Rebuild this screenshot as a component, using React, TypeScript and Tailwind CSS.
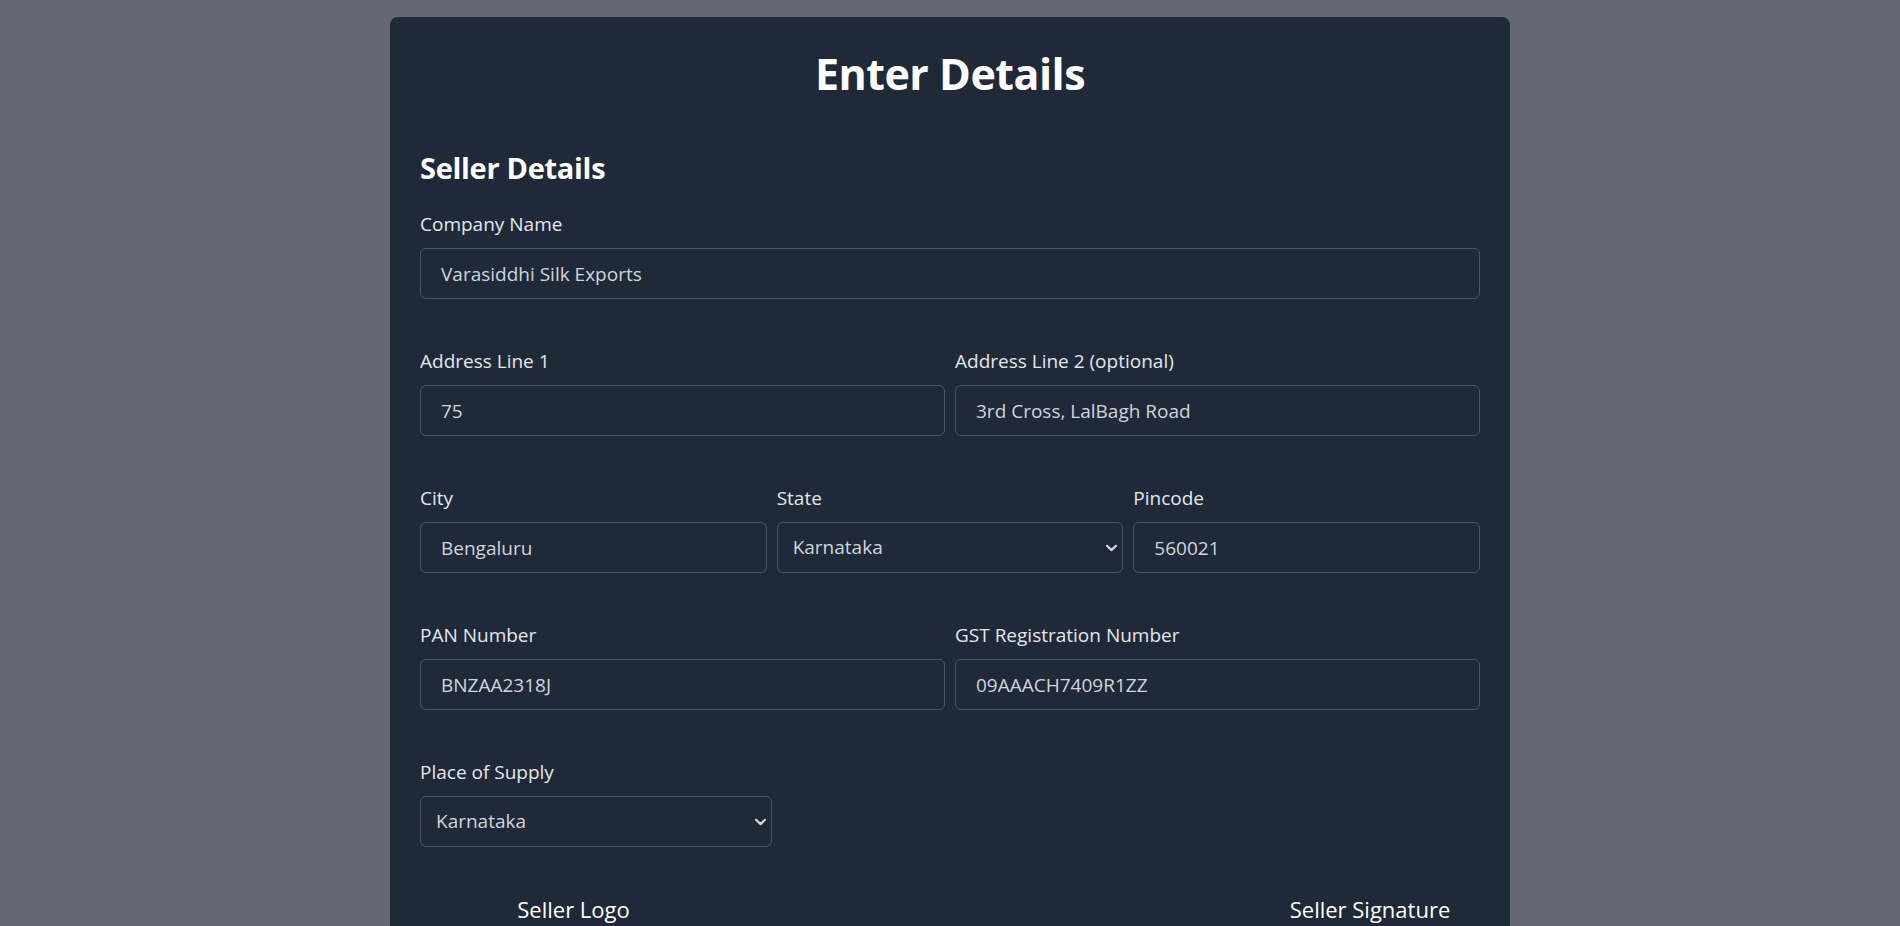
import React from "react";

const states = ["Karnataka", "Kerala", "Tamil Nadu", "Maharashtra", "Uttar Pradesh", "Delhi"];

function Field({ label, value, className = "" }: { label: string; value: string; className?: string }) {
  return (
    <div className={className}>
      <label className="mb-[10px] block text-[19px] leading-7 text-gray-200">{label}</label>
      <input
        defaultValue={value}
        className="h-[51px] w-full rounded-[6px] border border-[#4b5563] bg-transparent px-5 text-[19px] text-gray-300 outline-none"
      />
    </div>
  );
}

function Chevron() {
  return (
    <svg
      className="pointer-events-none absolute right-[6px] top-1/2 -translate-y-1/2 text-gray-300"
      width="11"
      height="7"
      viewBox="0 0 11 7"
      fill="none"
    >
      <path d="M1 1.2 5.5 5.6 10 1.2" stroke="currentColor" strokeWidth="2.2" strokeLinecap="round" strokeLinejoin="round" />
    </svg>
  );
}

function SelectField({ label, value, className = "" }: { label: string; value: string; className?: string }) {
  return (
    <div className={className}>
      <label className="mb-[10px] block text-[19px] leading-7 text-gray-200">{label}</label>
      <div className="relative">
        <select
          defaultValue={value}
          className="h-[51px] w-full appearance-none rounded-[6px] border border-[#4b5563] bg-transparent pl-[15px] text-[19px] text-gray-300 outline-none"
        >
          {states.map((s) => (
            <option key={s} value={s} className="bg-gray-800">
              {s}
            </option>
          ))}
        </select>
        <Chevron />
      </div>
    </div>
  );
}

export default function App() {
  return (
    <div className="min-h-screen bg-[#636874] pt-[17px] pb-10" style={{ fontFamily: '"Open Sans", "Noto Sans", sans-serif' }}>
      <div className="mx-auto w-[1120px] rounded-[8px] bg-[#1f2937] px-[30px] pt-[32px] pb-10">
        <h1 className="text-center text-[43px] font-bold leading-[50px] tracking-[-0.5px] text-white">Enter Details</h1>

        {/* SELLER */}
        <section className="mt-[51px]">
          <h2 className="text-[29px] font-bold leading-9 tracking-[-0.3px] text-white">Seller Details</h2>

          <div className="mt-[24px] flex flex-col gap-12">
            <Field label="Company Name" value="Varasiddhi Silk Exports" />

            <div className="grid grid-cols-2 gap-[10px]">
              <Field label="Address Line 1" value="75" />
              <Field label="Address Line 2 (optional)" value="3rd Cross, LalBagh Road" />
            </div>

            <div className="grid grid-cols-3 gap-[10px]">
              <Field label="City" value="Bengaluru" />
              <SelectField label="State" value="Karnataka" />
              <Field label="Pincode" value="560021" />
            </div>

            <div className="grid grid-cols-2 gap-[10px]">
              <Field label="PAN Number" value="BNZAA2318J" />
              <Field label="GST Registration Number" value="09AAACH7409R1ZZ" />
            </div>

            <SelectField label="Place of Supply" value="Karnataka" className="w-[352px]" />
          </div>

          {/* logo + signature */}
          <div className="mt-[45px] flex justify-between">
            <div className="w-[307px] text-center">
              <div className="text-[22px] leading-[35px] text-white">Seller Logo</div>
              <div className="mx-auto mt-3 h-[160px] w-[240px] rounded-[6px] border border-dashed border-[#4b5563]" />
            </div>
            <div className="w-[220px] text-center">
              <div className="text-[22px] leading-[35px] text-white">Seller Signature</div>
              <div className="mx-auto mt-3 h-[160px] w-[200px] rounded-[6px] border border-dashed border-[#4b5563]" />
            </div>
          </div>
        </section>
      </div>
    </div>
  );
}
